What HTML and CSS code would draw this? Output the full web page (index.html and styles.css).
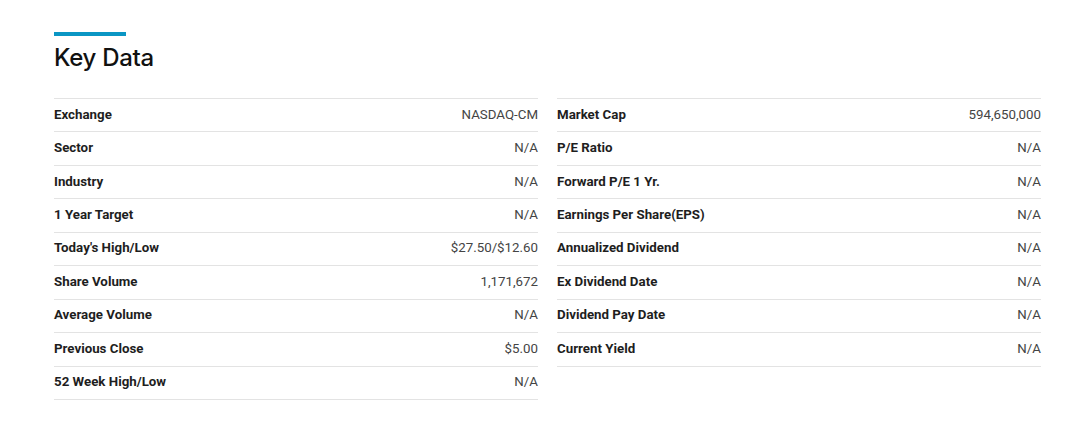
FILE: index.html
```html
<!DOCTYPE html>
<html>
<head>
<meta charset="utf-8">
<link rel="stylesheet" href="styles.css">
</head>
<body>
<section class="keydata">
  <div class="accent"></div>
  <h2 class="title">Key Data</h2>
  <div class="columns">
    <div class="col">
      <div class="row"><span class="label">Exchange</span><span class="value">NASDAQ-CM</span></div>
      <div class="row"><span class="label">Sector</span><span class="value">N/A</span></div>
      <div class="row"><span class="label">Industry</span><span class="value">N/A</span></div>
      <div class="row"><span class="label">1 Year Target</span><span class="value">N/A</span></div>
      <div class="row"><span class="label">Today's High/Low</span><span class="value">$27.50/$12.60</span></div>
      <div class="row"><span class="label">Share Volume</span><span class="value">1,171,672</span></div>
      <div class="row"><span class="label">Average Volume</span><span class="value">N/A</span></div>
      <div class="row"><span class="label">Previous Close</span><span class="value">$5.00</span></div>
      <div class="row"><span class="label">52 Week High/Low</span><span class="value">N/A</span></div>
    </div>
    <div class="col">
      <div class="row"><span class="label">Market Cap</span><span class="value">594,650,000</span></div>
      <div class="row"><span class="label">P/E Ratio</span><span class="value">N/A</span></div>
      <div class="row"><span class="label">Forward P/E 1 Yr.</span><span class="value">N/A</span></div>
      <div class="row"><span class="label">Earnings Per Share(EPS)</span><span class="value">N/A</span></div>
      <div class="row"><span class="label">Annualized Dividend</span><span class="value">N/A</span></div>
      <div class="row"><span class="label">Ex Dividend Date</span><span class="value">N/A</span></div>
      <div class="row"><span class="label">Dividend Pay Date</span><span class="value">N/A</span></div>
      <div class="row"><span class="label">Current Yield</span><span class="value">N/A</span></div>
    </div>
  </div>
</section>
</body>
</html>
```
FILE: styles.css
```css
html, body {
  margin: 0;
  padding: 0;
  background: #fff;
}
body {
  font-family: Roboto, "Liberation Sans", sans-serif;
  color: #1a1a1a;
}
.keydata {
  padding: 32px 39px 0 54px;
}
.accent {
  width: 72px;
  height: 4px;
  background: #0a96c4;
}
.title {
  margin: 0;
  padding-top: 7px;
  font-family: Inter, Roboto, sans-serif;
  font-weight: 500;
  font-size: 24px;
  line-height: 30px;
  color: #111;
  letter-spacing: -0.3px;
}
.columns {
  margin-top: 25px;
  display: grid;
  grid-template-columns: 484px 484px;
  column-gap: 19px;
  align-items: start;
}
.col {
  border-top: 1px solid #e3e3e3;
}
.row {
  box-sizing: border-box;
  height: 33.44px;
  display: flex;
  justify-content: space-between;
  align-items: center;
  border-bottom: 1px solid #e3e3e3;
  font-size: 13.3px;
  padding-bottom: 2px;
}
.label {
  font-weight: 700;
  color: #1e1e1e;
}
.value {
  color: #444;
}
```
